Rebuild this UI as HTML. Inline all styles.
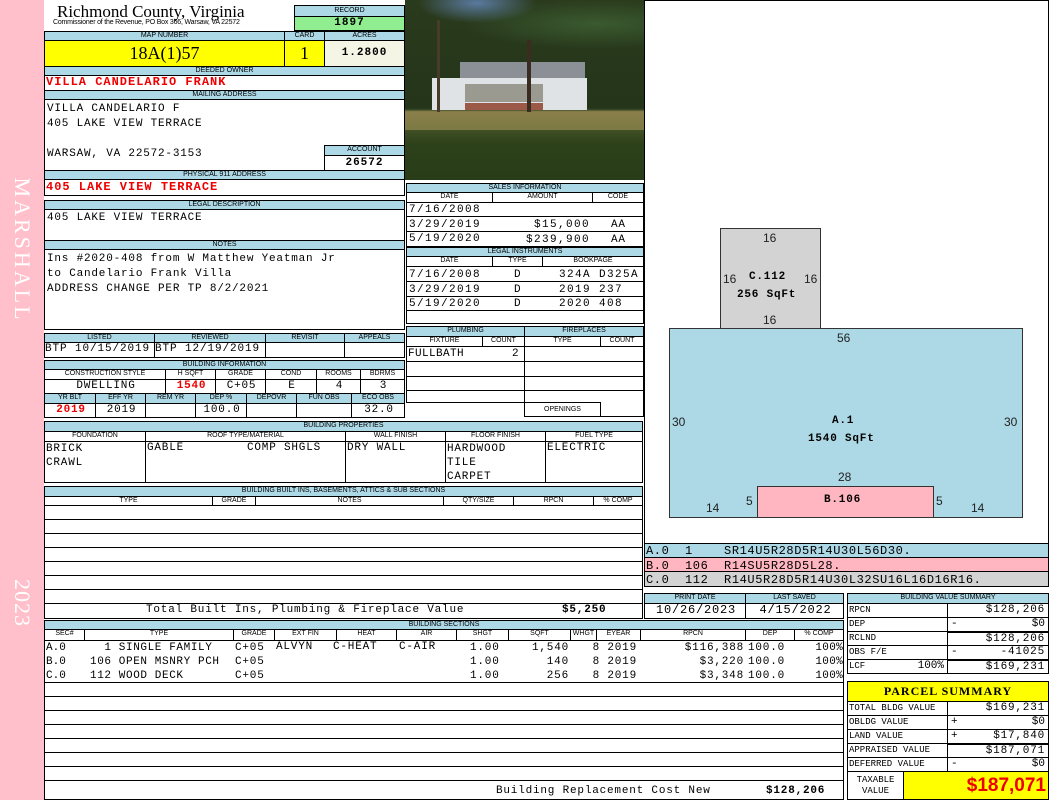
<!DOCTYPE html>
<html><head><meta charset="utf-8"><style>
*{box-sizing:border-box;margin:0;padding:0}
body{width:1050px;height:800px;position:relative;background:#fff;overflow:hidden;font-family:"Liberation Mono",monospace;font-size:11px;color:#000}
div{position:absolute}
.b{border:1px solid #000}
.h{background:#add8e6;border:1px solid #000;font-family:"Liberation Sans",sans-serif;font-size:7px;text-align:center;line-height:8px;white-space:nowrap;overflow:hidden}
.sh{border:1px solid #000;font-family:"Liberation Sans",sans-serif;font-size:7px;text-align:center;line-height:8px;white-space:nowrap;background:#fff}
.v{border:1px solid #000;font-size:11px;line-height:13px;white-space:nowrap;overflow:hidden;padding-left:2px;letter-spacing:.8px}
.t{white-space:nowrap;line-height:13px;letter-spacing:.8px}
.red{color:#e00;font-weight:bold}
.r{text-align:right;padding-right:3px}
.c{text-align:center}
.ln{border-bottom:1px solid #000;left:0;right:0;height:0}
.s{letter-spacing:1.4px}
</style></head><body>
<div style="left:0;top:0;width:44px;height:800px;background:#ffc0cb"></div>
<div style="left:22px;top:250px;transform:translate(-50%,-50%) rotate(90deg);color:#fff;font-family:'Liberation Serif',serif;font-size:22px;letter-spacing:3px;white-space:nowrap">MARSHALL</div>
<div style="left:22px;top:603px;transform:translate(-50%,-50%) rotate(90deg);color:#fff;font-family:'Liberation Serif',serif;font-size:22px;letter-spacing:1px;white-space:nowrap">2023</div>

<div style="left:57px;top:2px;font-family:'Liberation Serif',serif;font-size:17px;line-height:20px;white-space:nowrap">Richmond County, Virginia</div>
<div style="left:53px;top:19px;font-family:'Liberation Sans',sans-serif;font-size:7px;white-space:nowrap;letter-spacing:-.2px">Commissioner of the Revenue, PO Box 366, Warsaw, VA 22572</div>
<div class="h" style="left:294px;top:5px;width:111px;height:12px;line-height:10px">RECORD</div>
<div class="b" style="left:294px;top:16px;width:111px;height:15px;background:#90ee90;text-align:center;font-weight:bold;font-size:11px;line-height:13px;letter-spacing:1px">1897</div>
<div class="h" style="left:44px;top:31px;width:241px;height:10px">MAP NUMBER</div>
<div class="h" style="left:284px;top:31px;width:41px;height:10px">CARD</div>
<div class="h" style="left:324px;top:31px;width:81px;height:10px">ACRES</div>
<div class="b" style="left:44px;top:40px;width:241px;height:27px;background:#ff0;text-align:center;font-family:'Liberation Serif',serif;font-size:18px;line-height:25px">18A(1)57</div>
<div class="b" style="left:284px;top:40px;width:41px;height:27px;background:#ff0;text-align:center;font-family:'Liberation Serif',serif;font-size:18px;line-height:25px">1</div>
<div class="b" style="left:324px;top:40px;width:81px;height:27px;background:#f5f5e6;text-align:center;font-weight:bold;font-size:11px;line-height:25px;letter-spacing:1px">1.2800</div>
<div class="h" style="left:44px;top:66px;width:361px;height:10px">DEEDED OWNER</div>
<div class="b" style="left:44px;top:75px;width:361px;height:16px"></div>
<div class="t red" style="left:46px;top:76px;font-size:12px;letter-spacing:1px">VILLA CANDELARIO FRANK</div>
<div class="h" style="left:44px;top:90px;width:361px;height:10px">MAILING ADDRESS</div>
<div class="b" style="left:44px;top:99px;width:361px;height:72px"></div>
<div class="t" style="left:47px;top:103px">VILLA CANDELARIO F</div>
<div class="t" style="left:47px;top:118px">405 LAKE VIEW TERRACE</div>
<div class="t" style="left:47px;top:148px">WARSAW, VA 22572-3153</div>
<div class="h" style="left:324px;top:145px;width:81px;height:11px">ACCOUNT</div>
<div class="b" style="left:324px;top:155px;width:81px;height:16px;text-align:center;font-weight:bold;line-height:14px;letter-spacing:1px">26572</div>
<div class="h" style="left:44px;top:170px;width:361px;height:10px">PHYSICAL 911 ADDRESS</div>
<div class="b" style="left:44px;top:179px;width:361px;height:17px"></div>
<div class="t red" style="left:46px;top:181px;font-size:12px;letter-spacing:1px">405 LAKE VIEW TERRACE</div>

<div class="h" style="left:44px;top:200px;width:361px;height:10px">LEGAL DESCRIPTION</div>
<div class="b" style="left:44px;top:209px;width:361px;height:32px"></div>
<div class="t" style="left:47px;top:212px">405 LAKE VIEW TERRACE</div>
<div class="h" style="left:44px;top:240px;width:361px;height:10px">NOTES</div>
<div class="b" style="left:44px;top:249px;width:361px;height:81px"></div>
<div class="t" style="left:47px;top:253px">Ins #2020-408 from W Matthew Yeatman Jr</div>
<div class="t" style="left:47px;top:268px">to Candelario Frank Villa</div>
<div class="t" style="left:47px;top:283px">ADDRESS CHANGE PER TP 8/2/2021</div>

<div class="h" style="left:44px;top:333px;width:111px;height:10px">LISTED</div>
<div class="h" style="left:154px;top:333px;width:112px;height:10px">REVIEWED</div>
<div class="h" style="left:265px;top:333px;width:80px;height:10px">REVISIT</div>
<div class="h" style="left:344px;top:333px;width:61px;height:10px">APPEALS</div>
<div class="v" style="left:44px;top:342px;width:111px;height:16px;padding:0;letter-spacing:.9px">BTP 10/15/2019</div>
<div class="v" style="left:154px;top:342px;width:112px;height:16px;padding:0;letter-spacing:.9px">BTP 12/19/2019</div>
<div class="v" style="left:265px;top:342px;width:80px;height:16px"></div>
<div class="v" style="left:344px;top:342px;width:61px;height:16px"></div>

<div class="h" style="left:44px;top:360px;width:361px;height:10px">BUILDING INFORMATION</div>
<div class="sh" style="left:44px;top:369px;width:122px;height:11px">CONSTRUCTION STYLE</div>
<div class="sh" style="left:165px;top:369px;width:51px;height:11px">H SQFT</div>
<div class="sh" style="left:215px;top:369px;width:51px;height:11px">GRADE</div>
<div class="sh" style="left:265px;top:369px;width:52px;height:11px">COND</div>
<div class="sh" style="left:316px;top:369px;width:45px;height:11px">ROOMS</div>
<div class="sh" style="left:360px;top:369px;width:45px;height:11px">BDRMS</div>
<div class="v c" style="left:44px;top:379px;width:122px;height:15px">DWELLING</div>
<div class="v c red" style="left:165px;top:379px;width:51px;height:15px">1540</div>
<div class="v c" style="left:215px;top:379px;width:51px;height:15px">C+05</div>
<div class="v c" style="left:265px;top:379px;width:52px;height:15px">E</div>
<div class="v c" style="left:316px;top:379px;width:45px;height:15px">4</div>
<div class="v c" style="left:360px;top:379px;width:45px;height:15px">3</div>
<div class="h" style="left:44px;top:393px;width:52px;height:11px">YR BLT</div>
<div class="h" style="left:95px;top:393px;width:51px;height:11px">EFF YR</div>
<div class="h" style="left:145px;top:393px;width:51px;height:11px">REM YR</div>
<div class="h" style="left:195px;top:393px;width:52px;height:11px">DEP %</div>
<div class="h" style="left:246px;top:393px;width:51px;height:11px">DEPOVR</div>
<div class="h" style="left:296px;top:393px;width:56px;height:11px">FUN OBS</div>
<div class="h" style="left:351px;top:393px;width:54px;height:11px">ECO OBS</div>
<div class="v c red" style="left:44px;top:403px;width:52px;height:15px">2019</div>
<div class="v c" style="left:95px;top:403px;width:51px;height:15px">2019</div>
<div class="v" style="left:145px;top:403px;width:51px;height:15px"></div>
<div class="v c" style="left:195px;top:403px;width:52px;height:15px">100.0</div>
<div class="v" style="left:246px;top:403px;width:51px;height:15px"></div>
<div class="v" style="left:296px;top:403px;width:56px;height:15px"></div>
<div class="v c" style="left:351px;top:403px;width:54px;height:15px">32.0</div>

<div class="h" style="left:44px;top:421px;width:599px;height:11px">BUILDING PROPERTIES</div>
<div class="sh" style="left:44px;top:431px;width:102px;height:11px">FOUNDATION</div>
<div class="sh" style="left:145px;top:431px;width:201px;height:11px">ROOF TYPE/MATERIAL</div>
<div class="sh" style="left:345px;top:431px;width:101px;height:11px">WALL FINISH</div>
<div class="sh" style="left:445px;top:431px;width:101px;height:11px">FLOOR FINISH</div>
<div class="sh" style="left:545px;top:431px;width:98px;height:11px">FUEL TYPE</div>
<div class="b" style="left:44px;top:441px;width:102px;height:42px"></div>
<div class="b" style="left:145px;top:441px;width:201px;height:42px"></div>
<div class="b" style="left:345px;top:441px;width:101px;height:42px"></div>
<div class="b" style="left:445px;top:441px;width:101px;height:42px"></div>
<div class="b" style="left:545px;top:441px;width:98px;height:42px"></div>
<div class="t" style="left:46px;top:442px;line-height:14px">BRICK<br>CRAWL</div>
<div class="t" style="left:147px;top:442px">GABLE</div>
<div class="t" style="left:247px;top:442px">COMP SHGLS</div>
<div class="t" style="left:347px;top:442px">DRY WALL</div>
<div class="t" style="left:447px;top:442px;line-height:14px">HARDWOOD<br>TILE<br>CARPET</div>
<div class="t" style="left:547px;top:442px">ELECTRIC</div>

<div class="h" style="left:44px;top:486px;width:599px;height:11px">BUILDING BUILT INS, BASEMENTS, ATTICS &amp; SUB SECTIONS</div>
<div class="sh" style="left:44px;top:496px;width:169px;height:10px">TYPE</div>
<div class="sh" style="left:212px;top:496px;width:44px;height:10px">GRADE</div>
<div class="sh" style="left:255px;top:496px;width:189px;height:10px">NOTES</div>
<div class="sh" style="left:443px;top:496px;width:71px;height:10px">QTY/SIZE</div>
<div class="sh" style="left:513px;top:496px;width:81px;height:10px">RPCN</div>
<div class="sh" style="left:593px;top:496px;width:50px;height:10px">% COMP</div>
<div class="b" style="left:44px;top:505px;width:599px;height:99px">
<div class="ln" style="top:13px"></div><div class="ln" style="top:27px"></div><div class="ln" style="top:41px"></div><div class="ln" style="top:55px"></div><div class="ln" style="top:69px"></div><div class="ln" style="top:83px"></div>
</div>
<div class="b" style="left:44px;top:603px;width:599px;height:16px"></div>
<div class="t" style="left:146px;top:604px">Total Built Ins, Plumbing &amp; Fireplace Value</div>
<div class="t" style="left:562px;top:604px;font-weight:bold">$5,250</div>

<div class="h" style="left:44px;top:620px;width:800px;height:10px">BUILDING SECTIONS</div>
<div class="sh" style="left:44px;top:629px;width:41px;height:12px">SEC#</div>
<div class="sh" style="left:84px;top:629px;width:150px;height:12px">TYPE</div>
<div class="sh" style="left:233px;top:629px;width:42px;height:12px">GRADE</div>
<div class="sh" style="left:274px;top:629px;width:63px;height:12px">EXT FIN</div>
<div class="sh" style="left:336px;top:629px;width:61px;height:12px">HEAT</div>
<div class="sh" style="left:396px;top:629px;width:61px;height:12px">AIR</div>
<div class="sh" style="left:456px;top:629px;width:53px;height:12px">SHGT</div>
<div class="sh" style="left:508px;top:629px;width:63px;height:12px">SQFT</div>
<div class="sh" style="left:570px;top:629px;width:27px;height:12px">WHGT</div>
<div class="sh" style="left:596px;top:629px;width:45px;height:12px">EYEAR</div>
<div class="sh" style="left:640px;top:629px;width:106px;height:12px">RPCN</div>
<div class="sh" style="left:745px;top:629px;width:50px;height:12px">DEP</div>
<div class="sh" style="left:794px;top:629px;width:50px;height:12px">% COMP</div>
<div class="b" style="left:44px;top:640px;width:800px;height:160px">
<div class="ln" style="top:41px"></div><div class="ln" style="top:55px"></div><div class="ln" style="top:69px"></div><div class="ln" style="top:83px"></div><div class="ln" style="top:97px"></div><div class="ln" style="top:111px"></div><div class="ln" style="top:125px"></div><div class="ln" style="top:139px"></div>
</div>
<div class="t" style="left:46px;top:641px;line-height:14px;letter-spacing:0">A.0<br>B.0<br>C.0</div>
<div class="t" style="left:90px;top:641px;line-height:14px;letter-spacing:.6px">&nbsp;&nbsp;1 SINGLE FAMILY<br>106 OPEN MSNRY PCH<br>112 WOOD DECK</div>
<div class="t" style="left:235px;top:641px;line-height:14px">C+05<br>C+05<br>C+05</div>
<div class="t" style="left:276px;top:641px">ALVYN</div>
<div class="t" style="left:333px;top:641px">C-HEAT</div>
<div class="t" style="left:399px;top:641px">C-AIR</div>
<div class="t" style="left:470px;top:641px;line-height:14px">1.00<br>1.00<br>1.00</div>
<div class="t" style="left:500px;top:641px;width:69px;text-align:right;line-height:14px">1,540<br>140<br>256</div>
<div class="t" style="left:570px;top:641px;width:67px;text-align:right;line-height:14px">8 2019<br>8 2019<br>8 2019</div>
<div class="t" style="left:630px;top:641px;width:114px;text-align:right;line-height:14px">$116,388<br>$3,220<br>$3,348</div>
<div class="t" style="left:748px;top:641px;line-height:14px">100.0<br>100.0<br>100.0</div>
<div class="t" style="left:790px;top:641px;width:53px;text-align:right;line-height:14px;letter-spacing:.3px">100%<br>100%<br>100%</div>
<div class="t" style="left:496px;top:785px">Building Replacement Cost New</div>
<div class="t" style="left:766px;top:785px;font-weight:bold">$128,206</div>

<div style="left:405px;top:0;width:240px;height:180px;overflow:hidden;background:linear-gradient(#2a3a1c 0,#24351a 60%,#3a4a26 61%,#8a7f4a 62%,#7d7a44 72%,#36461e 80%,#24381a 100%)">
<div style="left:0;top:0;width:240px;height:60px;background:radial-gradient(ellipse at 30% 5%,#5a7aa0 0,transparent 25%),radial-gradient(ellipse at 80% 40%,#3a5a30 0,transparent 50%)"></div>
<div style="left:55px;top:62px;width:125px;height:20px;background:#8a9096"></div>
<div style="left:27px;top:78px;width:155px;height:32px;background:#dfe3e6"></div>
<div style="left:60px;top:84px;width:78px;height:18px;background:#9a9a90"></div>
<div style="left:60px;top:103px;width:78px;height:7px;background:#9b5a48"></div>
<div style="left:122px;top:40px;width:4px;height:72px;background:#3a2c20"></div>
<div style="left:32px;top:20px;width:3px;height:92px;background:#4a3a2a"></div>
<div style="left:0;top:130px;width:240px;height:50px;background:#2a3e18;opacity:.7"></div>
</div>

<div class="h" style="left:406px;top:183px;width:238px;height:10px">SALES INFORMATION</div>
<div class="sh" style="left:406px;top:192px;width:87px;height:11px">DATE</div>
<div class="sh" style="left:492px;top:192px;width:101px;height:11px">AMOUNT</div>
<div class="sh" style="left:592px;top:192px;width:52px;height:11px">CODE</div>
<div class="b" style="left:406px;top:202px;width:238px;height:45px"><div class="ln" style="top:13px"></div><div class="ln" style="top:28px"></div></div>
<div class="t s" style="left:409px;top:203px;line-height:14.5px">7/16/2008<br>3/29/2019<br>5/19/2020</div>
<div class="t s" style="left:492px;top:218px;width:98px;text-align:right;line-height:14.5px">$15,000<br>$239,900</div>
<div class="t" style="left:611px;top:218px;line-height:14.5px">AA<br>AA</div>
<div class="h" style="left:406px;top:247px;width:238px;height:10px">LEGAL INSTRUMENTS</div>
<div class="sh" style="left:406px;top:256px;width:87px;height:11px">DATE</div>
<div class="sh" style="left:492px;top:256px;width:51px;height:11px">TYPE</div>
<div class="sh" style="left:542px;top:256px;width:102px;height:11px">BOOKPAGE</div>
<div class="b" style="left:406px;top:266px;width:238px;height:58px"><div class="ln" style="top:14px"></div><div class="ln" style="top:29px"></div><div class="ln" style="top:43px"></div></div>
<div class="t s" style="left:409px;top:268px;line-height:14.5px">7/16/2008<br>3/29/2019<br>5/19/2020</div>
<div class="t" style="left:514px;top:268px;line-height:14.5px">D<br>D<br>D</div>
<div class="t s" style="left:559px;top:268px;line-height:14.5px">324A D325A<br>2019 237<br>2020 408</div>

<div class="h" style="left:406px;top:326px;width:119px;height:11px">PLUMBING</div>
<div class="h" style="left:524px;top:326px;width:120px;height:11px">FIREPLACES</div>
<div class="sh" style="left:406px;top:336px;width:77px;height:11px">FIXTURE</div>
<div class="sh" style="left:482px;top:336px;width:43px;height:11px">COUNT</div>
<div class="sh" style="left:524px;top:336px;width:77px;height:11px">TYPE</div>
<div class="sh" style="left:600px;top:336px;width:44px;height:11px">COUNT</div>
<div class="b" style="left:406px;top:346px;width:119px;height:57px"><div class="ln" style="top:14px"></div><div class="ln" style="top:29px"></div><div class="ln" style="top:43px"></div></div>
<div class="b" style="left:524px;top:346px;width:120px;height:71px"><div class="ln" style="top:14px"></div><div class="ln" style="top:29px"></div><div class="ln" style="top:43px"></div></div>
<div class="t" style="left:408px;top:348px;letter-spacing:.4px">FULLBATH</div>
<div class="t" style="left:512px;top:348px">2</div>
<div class="sh" style="left:524px;top:402px;width:77px;height:15px;line-height:13px">OPENINGS</div>

<div class="b" style="left:644px;top:0;width:405px;height:545px"></div>
<div style="left:720px;top:228px;width:101px;height:101px;background:#d3d3d3;border:1px solid #333"></div>
<div style="left:669px;top:328px;width:354px;height:190px;background:#add8e6;border:1px solid #333"></div>
<div style="left:757px;top:486px;width:177px;height:32px;background:#ffb6c1;border:1px solid #333"></div>
<div style="font-family:'Liberation Sans',sans-serif;font-size:12px;left:0;top:0;width:1050px;height:545px;color:#222">
<div style="left:763px;top:231px">16</div><div style="left:723px;top:272px">16</div><div style="left:804px;top:272px">16</div><div style="left:763px;top:313px">16</div>
<div style="left:837px;top:331px">56</div><div style="left:672px;top:415px">30</div><div style="left:1004px;top:415px">30</div>
<div style="left:838px;top:470px">28</div><div style="left:706px;top:501px">14</div><div style="left:971px;top:501px">14</div>
<div style="left:746px;top:494px">5</div><div style="left:936px;top:494px">5</div>
</div>
<div class="t" style="left:749px;top:271px;font-weight:bold;font-size:11px">C.112</div>
<div class="t" style="left:737px;top:289px;font-weight:bold;font-size:11px">256 SqFt</div>
<div class="t" style="left:832px;top:415px;font-weight:bold;font-size:11px">A.1</div>
<div class="t" style="left:808px;top:433px;font-weight:bold;font-size:11px">1540 SqFt</div>
<div class="t" style="left:824px;top:494px;font-weight:bold;font-size:11px">B.106</div>
<div class="b" style="left:644px;top:543px;width:405px;height:15px;background:#add8e6"></div>
<div class="b" style="left:644px;top:557px;width:405px;height:15px;background:#ffb6c1"></div>
<div class="b" style="left:644px;top:571px;width:405px;height:16px;background:#d3d3d3"></div>
<div class="t" style="left:646px;top:544px;line-height:14.5px;font-size:12px;letter-spacing:.6px">A.0&nbsp;&nbsp;1&nbsp;&nbsp;&nbsp;&nbsp;SR14U5R28D5R14U30L56D30.<br>B.0&nbsp;&nbsp;106&nbsp;&nbsp;R14SU5R28D5L28.<br>C.0&nbsp;&nbsp;112&nbsp;&nbsp;R14U5R28D5R14U30L32SU16L16D16R16.</div>

<div class="h" style="left:644px;top:593px;width:102px;height:11px">PRINT DATE</div>
<div class="h" style="left:745px;top:593px;width:99px;height:11px">LAST SAVED</div>
<div class="v c" style="left:644px;top:603px;width:102px;height:16px;font-size:12px">10/26/2023</div>
<div class="v c" style="left:745px;top:603px;width:99px;height:16px;font-size:12px">4/15/2022</div>

<div class="h" style="left:847px;top:593px;width:202px;height:11px">BUILDING VALUE SUMMARY</div>
<div style="left:847px;top:603px;width:202px;height:71px;font-size:9px">
<div class="b" style="left:0;top:0;width:101px;height:15px;line-height:13px;padding-left:1px">RPCN</div><div class="b r" style="left:100px;top:0;width:102px;height:15px;line-height:13px;font-size:11px;letter-spacing:.8px">$128,206</div>
<div class="b" style="left:0;top:14px;width:101px;height:15px;line-height:13px;padding-left:1px">DEP</div><div class="b r" style="left:100px;top:14px;width:102px;height:15px;line-height:13px;font-size:11px"><span style="float:left;padding-left:3px">-</span>$0</div>
<div class="b" style="left:0;top:28px;width:101px;height:15px;line-height:13px;padding-left:1px">RCLND</div><div class="b r" style="left:100px;top:28px;width:102px;height:15px;line-height:13px;font-size:11px;border-top:2px solid #000;letter-spacing:.8px">$128,206</div>
<div class="b" style="left:0;top:42px;width:101px;height:15px;line-height:13px;padding-left:1px">OBS F/E</div><div class="b r" style="left:100px;top:42px;width:102px;height:15px;line-height:13px;font-size:11px;letter-spacing:.8px"><span style="float:left;padding-left:3px">-</span>-41025</div>
<div class="b" style="left:0;top:56px;width:101px;height:15px;line-height:13px;padding-left:1px">LCF<span style="position:absolute;right:3px;font-size:11px">100%</span></div><div class="b r" style="left:100px;top:56px;width:102px;height:15px;line-height:13px;font-size:11px;border-top:2px solid #000;letter-spacing:.8px">$169,231</div>
</div>

<div class="b" style="left:847px;top:681px;width:202px;height:21px;background:#ff0;text-align:center;font-family:'Liberation Serif',serif;font-weight:bold;font-size:12px;line-height:19px;letter-spacing:1px">PARCEL SUMMARY</div>
<div style="left:847px;top:701px;width:202px;height:99px;font-size:9px">
<div class="b" style="left:0;top:0;width:101px;height:15px;line-height:13px;padding-left:1px">TOTAL BLDG VALUE</div><div class="b r" style="left:100px;top:0;width:102px;height:15px;line-height:13px;font-size:11px;letter-spacing:.8px">$169,231</div>
<div class="b" style="left:0;top:14px;width:101px;height:15px;line-height:13px;padding-left:1px">OBLDG VALUE</div><div class="b r" style="left:100px;top:14px;width:102px;height:15px;line-height:13px;font-size:11px"><span style="float:left;padding-left:3px">+</span>$0</div>
<div class="b" style="left:0;top:28px;width:101px;height:15px;line-height:13px;padding-left:1px">LAND VALUE</div><div class="b r" style="left:100px;top:28px;width:102px;height:15px;line-height:13px;font-size:11px;letter-spacing:.8px"><span style="float:left;padding-left:3px">+</span>$17,840</div>
<div class="b" style="left:0;top:42px;width:101px;height:15px;line-height:13px;padding-left:1px">APPRAISED VALUE</div><div class="b r" style="left:100px;top:42px;width:102px;height:15px;line-height:13px;font-size:11px;border-top:2px solid #000;letter-spacing:.8px">$187,071</div>
<div class="b" style="left:0;top:56px;width:101px;height:15px;line-height:13px;padding-left:1px">DEFERRED VALUE</div><div class="b r" style="left:100px;top:56px;width:102px;height:15px;line-height:13px;font-size:11px"><span style="float:left;padding-left:3px">-</span>$0</div>
<div class="b" style="left:0;top:70px;width:57px;height:29px;text-align:center;line-height:11px;padding-top:3px">TAXABLE<br>VALUE</div>
<div class="b" style="left:56px;top:70px;width:146px;height:29px;background:#ff0;text-align:right;padding-right:2px;font-family:'Liberation Sans',sans-serif;font-weight:bold;font-size:19px;color:#e00;line-height:27px">$187,071</div>
</div>
</body></html>
